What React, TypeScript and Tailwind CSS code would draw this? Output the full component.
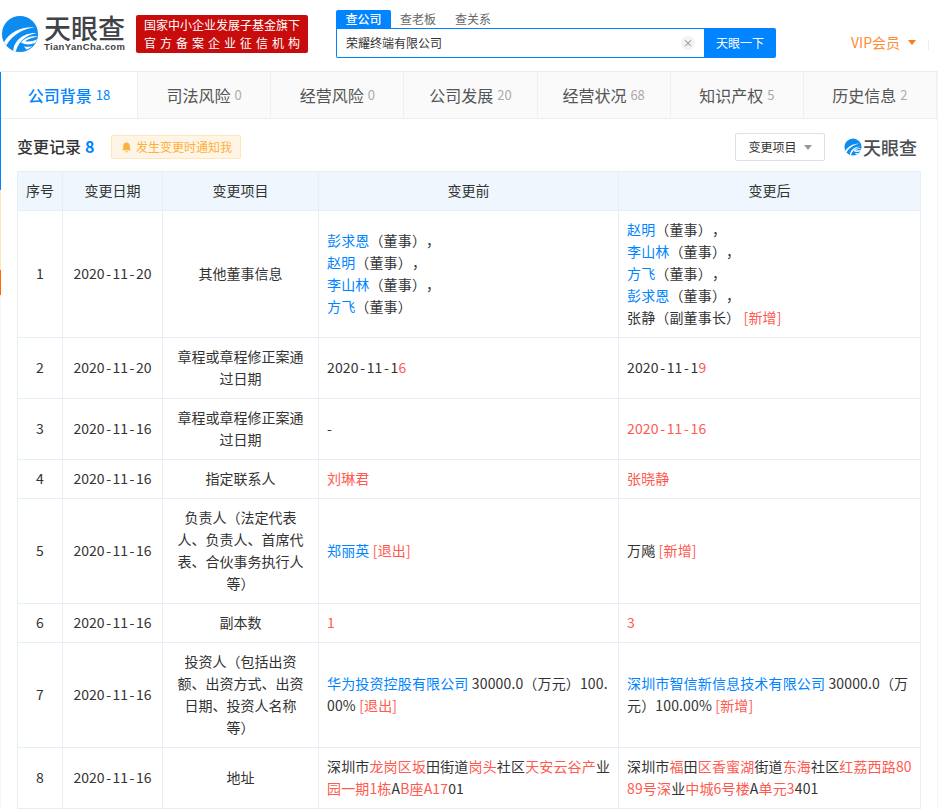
import type { ReactNode } from "react";

const cjk = "font-['Noto_Sans_CJK_SC','Noto_Sans',sans-serif]";

function LogoMark({ className }: { className: string }) {
    return (
        <svg viewBox="0 0 40 40" className={className}>
            <circle cx="20" cy="20" r="19" fill="#0c8cf0" />
            <path d="M3 29C9 18 21 12 36 13C24 14.5 13 20 5.5 32z" fill="#fff" />
            <path d="M13 38C13 28 23 18 38 19C29 20.5 19 26 15.5 38.5z" fill="#fff" />
            <path d="M21 29C25 24 31 22 38.5 22.5C33 23.5 28 25.5 25.5 27.5C29 28.5 34 27.5 38 25.5C37.5 27 37 28 36 29.5C31 31.5 25 31.5 21 29z" fill="#fff" />
            <path d="M24 33C27 34 30 33.5 33 32.5C31 34.5 29 35.5 27 36.5z" fill="#fff" />
        </svg>
    );
}

function Hl({ children }: { children: ReactNode }) {
    return <span className="text-[#ff5a4f]">{children}</span>;
}

function Lk({ children }: { children: ReactNode }) {
    return <span className="text-[#0084ff]">{children}</span>;
}

function Line({ children }: { children: ReactNode }) {
    return <div>{children}</div>;
}

// hyphens in the dates run wider than the fallback font's
function Dash() {
    return <span className="mx-[1.5px]">-</span>;
}

function DateText({ value }: { value: string }) {
    const [y, m, d] = value.split("-");
    return (
        <>
            {y}
            <Dash />
            {m}
            <Dash />
            {d}
        </>
    );
}

const tabs = [
    { name: "公司背景", count: "18", active: true },
    { name: "司法风险", count: "0" },
    { name: "经营风险", count: "0" },
    { name: "公司发展", count: "20" },
    { name: "经营状况", count: "68" },
    { name: "知识产权", count: "5" },
    { name: "历史信息", count: "2" },
];

const rows: { date: string; item: string; before: ReactNode; after: ReactNode }[] = [
    {
        date: "2020-11-20",
        item: "其他董事信息",
        before: (
            <>
                <Line><Lk>彭求恩</Lk>（董事），</Line>
                <Line><Lk>赵明</Lk>（董事），</Line>
                <Line><Lk>李山林</Lk>（董事），</Line>
                <Line><Lk>方飞</Lk>（董事）</Line>
            </>
        ),
        after: (
            <>
                <Line><Lk>赵明</Lk>（董事），</Line>
                <Line><Lk>李山林</Lk>（董事），</Line>
                <Line><Lk>方飞</Lk>（董事），</Line>
                <Line><Lk>彭求恩</Lk>（董事），</Line>
                <Line>张静（副董事长） <Hl>[新增]</Hl></Line>
            </>
        ),
    },
    {
        date: "2020-11-20",
        item: "章程或章程修正案通过日期",
        before: <>2020<Dash />11<Dash />1<Hl>6</Hl></>,
        after: <>2020<Dash />11<Dash />1<Hl>9</Hl></>,
    },
    {
        date: "2020-11-16",
        item: "章程或章程修正案通过日期",
        before: "-",
        after: <Hl><DateText value="2020-11-16" /></Hl>,
    },
    { date: "2020-11-16", item: "指定联系人", before: <Hl>刘琳君</Hl>, after: <Hl>张晓静</Hl> },
    {
        date: "2020-11-16",
        item: "负责人（法定代表人、负责人、首席代表、合伙事务执行人等）",
        before: <><Lk>郑丽英</Lk> <Hl>[退出]</Hl></>,
        after: <>万飚 <Hl>[新增]</Hl></>,
    },
    { date: "2020-11-16", item: "副本数", before: <Hl>1</Hl>, after: <Hl>3</Hl> },
    {
        date: "2020-11-16",
        item: "投资人（包括出资额、出资方式、出资日期、投资人名称等）",
        before: <><Lk>华为投资控股有限公司</Lk> 30000.0（万元）100.00% <Hl>[退出]</Hl></>,
        after: <><Lk>深圳市智信新信息技术有限公司</Lk> 30000.0（万元）100.00% <Hl>[新增]</Hl></>,
    },
    {
        date: "2020-11-16",
        item: "地址",
        before: <>深圳市<Hl>龙岗区坂</Hl>田街道<Hl>岗头</Hl>社区<Hl>天安云谷产</Hl>业<Hl>园一期1栋</Hl>A<Hl>B座A17</Hl>01</>,
        after: <>深圳市<Hl>福</Hl>田<Hl>区香蜜湖</Hl>街道<Hl>东海</Hl>社区<Hl>红荔西路8089号深</Hl>业<Hl>中城6号楼</Hl>A<Hl>单元3</Hl>401</>,
    },
];

const th = "border border-[#e6eef6] bg-[#eff6fd] px-2 pt-[7px] pb-[9px] text-center font-normal";
const td = "border border-[#e6eef6] px-[9px] pt-[7px] pb-[9px] text-center break-all";
const tdLeft = "border border-[#e6eef6] pl-2 pr-[6px] pt-[7px] pb-[9px] text-left break-all tracking-[0.15px]";

export default function App() {
    return (
        <div className={`${cjk} flex h-[809px] overflow-hidden bg-[#f5f5f5] text-[#333] [text-spacing-trim:space-all]`}>
            <div className="mt-[72px] flex w-px shrink-0 flex-col">
                <div className="h-[118px] bg-[#0084ff]" />
                <div className="h-[80px] bg-[#ffe7ba]" />
                <div className="h-[25px] bg-[#ff6a00]" />
            </div>
            <div className="min-w-0 flex-1">
                <header className="-ml-px flex h-[71px] w-[938px] items-start bg-white shadow-[0_1px_4px_rgba(0,0,0,0.08)]">
                    <LogoMark className="ml-[1px] mt-[15px] h-[38px] w-[38px] shrink-0" />
                    <div className="ml-[5px] mt-[12px] w-[84px] shrink-0 text-[#3f4347]">
                        <div className="text-[27px] font-medium leading-[31px]">天眼查</div>
                        <div className="font-['Liberation_Sans',sans-serif] text-[9.5px] font-bold leading-[8px] tracking-[0.35px]">TianYanCha.com</div>
                    </div>
                    <div className="ml-[8px] mt-[15px] flex h-[38px] w-[172px] shrink-0 flex-col items-center justify-center rounded-[2px] bg-[#c80c0c] text-white">
                        <div className="text-[12px] leading-[18px]">国家中小企业发展子基金旗下</div>
                        <div className="pl-[4px] text-[12px] leading-[18px] tracking-[4px]">官方备案企业征信机构</div>
                    </div>
                    <div className="ml-[28px] mt-[10px] w-[440px] shrink-0">
                        <div className="flex h-[18px] text-[12px] leading-[18px] text-[#666]">
                            <div className="w-[55px] rounded-t-[2px] bg-[#0084ff] text-center font-medium text-white">查公司</div>
                            <div className="ml-[9px]">查老板</div>
                            <div className="ml-[19px]">查关系</div>
                        </div>
                        <div className="flex h-[30px]">
                            <div className="flex min-w-0 flex-1 items-center justify-between rounded-bl-[2px] border border-r-0 border-[#0084ff] pl-[9px] pr-[9px] text-[12px] text-[#333]">
                                <span>荣耀终端有限公司</span>
                                <span className="flex h-[14px] w-[14px] items-center justify-center rounded-full bg-[#f3f3f3] text-[10px] leading-none text-[#888]">×</span>
                            </div>
                            <button type="button" className="w-[72px] rounded-r-[2px] bg-[#0084ff] text-[12px] text-white">天眼一下</button>
                        </div>
                    </div>
                    <div className="ml-[75px] mt-[32px] flex items-center text-[14px] leading-[20px] text-[#ff8a33]">
                        VIP会员
                        <span className="ml-[8px] h-0 w-0 border-x-[4px] border-t-[5px] border-x-transparent border-t-[#ff7a1a]" />
                    </div>
                    <div className="ml-[12px] mt-[40px] h-[10px] w-px bg-[#eee]" />
                </header>
                <main className="mt-px w-[936px] bg-white">
                    <nav className="flex h-[47px] border-b border-[#eee] bg-[#fafafa]">
                        {tabs.map((t) => (
                            <div
                                key={t.name}
                                className={`flex items-center justify-center border-r border-[#f0f0f0] ${t.active ? "w-[137px] shrink-0 bg-white text-[#0084ff]" : "flex-1 text-[#555]"}`}
                            >
                                <span className={`text-[16px] ${t.active ? "font-medium" : ""}`}>{t.name}</span>
                                <span className={`ml-[4px] text-[13px] ${t.active ? "text-[#0084ff]" : "text-[#aaa]"}`}>{t.count}</span>
                            </div>
                        ))}
                    </nav>
                    <div className="pl-[16px] pr-[16px]">
                        <div className="flex h-[52px] items-center pt-[4px]">
                            <h2 className="-mt-[2px] text-[16px] font-medium text-[#333]">变更记录</h2>
                            <span className="-mt-[2px] ml-[4px] text-[16px] font-bold text-[#0084ff]">8</span>
                            <div className="ml-[17px] flex h-[24px] w-[130px] items-center justify-center rounded-[2px] border border-[#ffe7ba] bg-[#fff5e6] text-[12px] text-[#ffb03a]">
                                <svg viewBox="0 0 12 12" className="mr-[4px] h-[11px] w-[11px]" fill="#ffb03a">
                                    <path d="M6 0.5c-2.2 0-3.6 1.7-3.6 3.8V7L1.2 9h9.6L9.6 7V4.3C9.6 2.2 8.2 0.5 6 0.5zM4.6 10a1.4 1.4 0 0 0 2.8 0z" />
                                </svg>
                                发生变更时通知我
                            </div>
                            <div className="ml-auto flex h-[28px] w-[90px] items-center justify-center rounded-[2px] border border-[#e0e0e0] text-[12px] text-[#333]">
                                变更项目
                                <span className="ml-[7px] h-0 w-0 border-x-[4px] border-t-[5px] border-x-transparent border-t-[#999]" />
                            </div>
                            <div className="ml-[19px] mr-[4px] flex items-center text-[#4a4e52]">
                                <LogoMark className="h-[18px] w-[18px]" />
                                <span className="ml-[1px] text-[18px] font-medium leading-[20px]">天眼查</span>
                            </div>
                        </div>
                        <table className="w-[903px] table-fixed border-collapse text-[14px] leading-[22px]">
                            <colgroup>
                                <col className="w-[45px]" />
                                <col className="w-[100px]" />
                                <col className="w-[156px]" />
                                <col className="w-[300px]" />
                                <col className="w-[302px]" />
                            </colgroup>
                            <thead>
                                <tr>
                                    <th className={th}>序号</th>
                                    <th className={th}>变更日期</th>
                                    <th className={th}>变更项目</th>
                                    <th className={th}>变更前</th>
                                    <th className={th}>变更后</th>
                                </tr>
                            </thead>
                            <tbody>
                                {rows.map((r, i) => (
                                    <tr key={i}>
                                        <td className={td}>{i + 1}</td>
                                        <td className={td}><DateText value={r.date} /></td>
                                        <td className={td}>{r.item}</td>
                                        <td className={tdLeft}>{r.before}</td>
                                        <td className={tdLeft}>{r.after}</td>
                                    </tr>
                                ))}
                            </tbody>
                        </table>
                    </div>
                </main>
            </div>
        </div>
    );
}
